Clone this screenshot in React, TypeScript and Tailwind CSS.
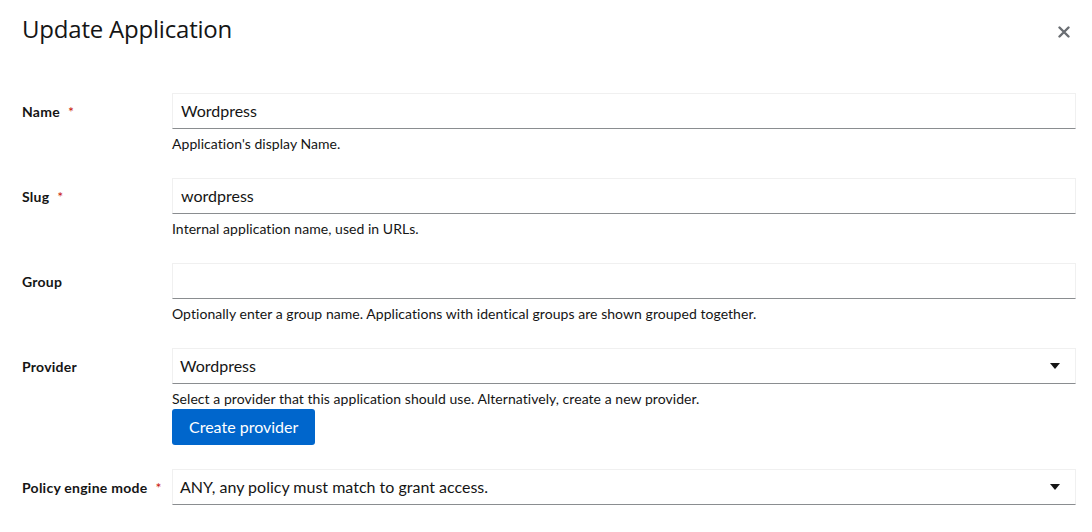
import React from 'react';

const body = { fontFamily: 'Lato, "Open Sans", "Liberation Sans", sans-serif' };
const display = { fontFamily: '"Open Sans", "Liberation Sans", sans-serif' };

interface FieldProps {
  label: string;
  required?: boolean;
  children: React.ReactNode;
}

const Field = ({ label, required, children }: FieldProps) => (
  <div className="flex">
    <div className="w-[150px] shrink-0 pt-[8px] text-[14px] leading-[21px] font-bold tracking-[0.25px] text-[#151515]">
      {label}
      {required && <span className="ml-[8px] font-normal text-[#c9190b]">*</span>}
    </div>
    <div className="flex-1 min-w-0">{children}</div>
  </div>
);

const TextInput = ({ value }: { value: string }) => (
  <div className="h-[36px] border border-[#f0f0f0] border-b-[#8a8d90] px-[8px] flex items-center text-[16px] text-[#151515]">
    {value}
  </div>
);

const Select = ({ value }: { value: string }) => (
  <div className="h-[36px] border border-[#f0f0f0] border-b-[#8a8d90] pl-[7px] pr-[15px] flex items-center justify-between text-[16px] text-[#151515]">
    <span>{value}</span>
    <svg width="10" height="6" viewBox="0 0 10 6">
      <path d="M0 0h10L5 6z" fill="#151515" />
    </svg>
  </div>
);

const Help = ({ children }: { children: React.ReactNode }) => (
  <div className="mt-[4px] text-[14px] leading-[21px] tracking-[0.05px] text-[#151515]">{children}</div>
);

export default function App() {
  return (
    <div className="w-[1092px] h-[532px] bg-white overflow-hidden" style={body}>
      <div className="flex items-start justify-between pl-[22px] pr-[22px] pt-[13px]">
        <h1 className="text-[24px] leading-[31px] text-[#151515] tracking-[-0.2px]" style={display}>
          Update Application
        </h1>
        <svg className="mt-[13px]" width="12" height="12" viewBox="0 0 12 12">
          <path d="M1.5 1.5l9 9M10.5 1.5l-9 9" stroke="#6a6e73" strokeWidth="2.4" strokeLinecap="round" />
        </svg>
      </div>
      <div className="pl-[22px] pr-[16px] pt-[49px] flex flex-col gap-[24px]">
        <Field label="Name" required>
          <TextInput value="Wordpress" />
          <Help>Application's display Name.</Help>
        </Field>
        <Field label="Slug" required>
          <TextInput value="wordpress" />
          <Help>Internal application name, used in URLs.</Help>
        </Field>
        <Field label="Group">
          <TextInput value="" />
          <Help>Optionally enter a group name. Applications with identical groups are shown grouped together.</Help>
        </Field>
        <Field label="Provider">
          <Select value="Wordpress" />
          <Help>Select a provider that this application should use. Alternatively, create a new provider.</Help>
          <button className="h-[36px] px-[17px] rounded-[3px] bg-[#0066cc] text-white text-[16px]">
            Create provider
          </button>
        </Field>
        <Field label="Policy engine mode" required>
          <Select value="ANY, any policy must match to grant access." />
        </Field>
      </div>
    </div>
  );
}
